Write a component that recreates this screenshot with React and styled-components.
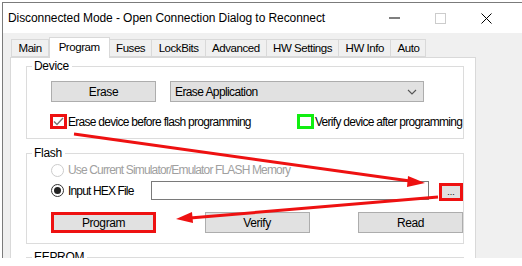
import React from "react";
import styled, { createGlobalStyle } from "styled-components";

const GlobalStyle = createGlobalStyle`
  html, body {
    margin: 0;
    padding: 0;
    background: #ffffff;
  }
  body {
    font-family: "Liberation Sans", Arial, sans-serif;
    font-size: 12px;
    color: #000;
  }
  * {
    white-space: nowrap;
  }
`;

const Page = styled.div`
  width: 522px;
  height: 266px;
  padding: 2px 0 0 2px;
  box-sizing: border-box;
  position: relative;
  overflow: hidden;
`;

const Window = styled.div`
  width: 520px;
  height: 255px;
  border-top: 1px solid #7b7b7b;
  border-left: 1px solid #7b7b7b;
  display: flex;
  flex-direction: column;
  overflow: hidden;
`;

const TitleBar = styled.div`
  height: 30px;
  flex: none;
  background: #fff;
  display: flex;
  align-items: center;
  padding-left: 5px;
`;

const Title = styled.div`
  flex: 1;
  font-size: 12px;
  letter-spacing: -0.08px;
`;

const Caption = styled.div`
  width: 46px;
  height: 30px;
  display: flex;
  align-items: center;
  justify-content: center;
`;

const Body = styled.div`
  flex: 1;
  background: #f0f0f0;
  padding: 4px 0 0 7px;
  display: flex;
  flex-direction: column;
`;

const TabStrip = styled.div`
  display: flex;
  align-items: flex-end;
  height: 20px;
  padding-left: 1px;
  position: relative;
  z-index: 1;
`;

const Tab = styled.div`
  height: ${p => (p.active ? "21px" : "18px")};
  margin-bottom: ${p => (p.active ? "-1px" : "0")};
  padding: 0 ${p => (p.active ? "9px" : "6px")} 0 ${p => (p.active ? "9px" : "6.5px")};
  background: ${p => (p.active ? "#fff" : "#f0f0f0")};
  border: 1px solid #d9d9d9;
  border-bottom: ${p => (p.active ? "none" : "1px solid #d9d9d9")};
  border-left: ${p => (p.first || p.active ? "1px solid #d9d9d9" : "none")};
  display: flex;
  align-items: center;
  box-sizing: border-box;
  font-size: 11.5px;
  letter-spacing: -0.45px;
  padding-bottom: ${p => (p.active ? "3px" : "0")};
`;

const Panel = styled.div`
  width: 501px;
  flex: 1;
  background: #fff;
  border: 1px solid #d9d9d9;
  border-bottom: none;
  box-sizing: border-box;
  padding: 1px 11px 0 15px;
  display: flex;
  flex-direction: column;
  gap: 7px;
`;

const Group = styled.fieldset`
  margin: 0;
  padding: 0 0 0 24px;
  border: 1px solid #dcdcdc;
  height: ${p => p.h}px;
  box-sizing: border-box;
  display: flex;
  flex-direction: column;
  flex: none;
`;

const Legend = styled.legend`
  padding: 0 3px 0 2px;
  margin-left: -19px;
  font-size: 12px;
  line-height: 14px;
  letter-spacing: -0.3px;
`;

const Row = styled.div`
  display: flex;
  align-items: center;
  margin-top: ${p => p.mt || 0}px;
  gap: ${p => p.gap || 0}px;
`;

const Button = styled.div`
  width: 105px;
  height: 21px;
  box-sizing: border-box;
  background: #e1e1e1;
  border: ${p => (p.mark ? "3px solid #ee1111" : "1px solid #adadad")};
  display: flex;
  align-items: center;
  justify-content: center;
  font-size: 12px;
  letter-spacing: -0.4px;
  flex: none;
`;

const Select = styled.div`
  width: 254px;
  height: 21px;
  box-sizing: border-box;
  background: #e1e1e1;
  border: 1px solid #adadad;
  display: flex;
  align-items: center;
  justify-content: space-between;
  padding: 0 6px 0 4px;
  letter-spacing: -0.6px;
`;

const CheckGrid = styled.div`
  display: grid;
  grid-template-columns: 247px auto;
  margin-top: 12px;
  margin-left: -1px;
`;

const CheckLabel = styled.div`
  display: flex;
  align-items: center;
  letter-spacing: -0.72px;
`;

const CheckBox = styled.div`
  width: 17px;
  height: 15px;
  box-sizing: border-box;
  border: 3px solid ${p => p.ring};
  background: #fff;
  display: flex;
  align-items: center;
  justify-content: center;
  margin-right: 1px;
`;

const RadioRow = styled.div`
  display: flex;
  align-items: center;
  height: 20px;
  color: ${p => (p.disabled ? "#a0a0a0" : "#000")};
  letter-spacing: -0.85px;
`;

const Radio = styled.div`
  width: 13px;
  height: 13px;
  box-sizing: border-box;
  border-radius: 50%;
  border: 1px solid ${p => (p.disabled ? "#cccccc" : "#333")};
  background: #fff;
  margin-right: 4px;
  display: flex;
  align-items: center;
  justify-content: center;
  &::after {
    content: "";
    width: 7px;
    height: 7px;
    border-radius: 50%;
    background: ${p => (p.checked ? "#222" : "transparent")};
  }
`;

const FileInput = styled.div`
  width: 278px;
  height: 19px;
  box-sizing: border-box;
  border: 1px solid #7a7a7a;
  background: #fff;
  margin-left: auto;
`;

const HexField = styled.div`
  display: flex;
  align-items: center;
  width: 412px;
`;

const Browse = styled.div`
  width: 24px;
  height: 18px;
  box-sizing: border-box;
  margin-left: 10px;
  margin-top: 3px;
  border: 3px solid #ee1111;
  background: #e1e1e1;
  display: flex;
  align-items: center;
  justify-content: center;
  font-size: 9px;
  line-height: 1;
`;

const ButtonRow = styled.div`
  display: grid;
  grid-template-columns: 105px 105px 105px;
  column-gap: 48.5px;
  margin-top: 11px;
`;

const Overlay = styled.svg`
  position: absolute;
  left: 0;
  top: 0;
  pointer-events: none;
`;

const RightStrip = styled.div`
  flex: 1;
`;

function Chevron() {
  return (
    <svg width="10" height="6" viewBox="0 0 10 6">
      <path d="M1 1 L5 5 L9 1" fill="none" stroke="#555" strokeWidth="1.1" />
    </svg>
  );
}

function Tick() {
  return (
    <svg width="11" height="9" viewBox="0 0 11 9">
      <path d="M1 4.5 L4 7.5 L10 1" fill="none" stroke="#777" strokeWidth="1.4" />
    </svg>
  );
}

const tabs = ["Main", "Program", "Fuses", "LockBits", "Advanced", "HW Settings", "HW Info", "Auto"];

export default function App() {
  return (
    <Page>
      <GlobalStyle />
      <Window>
        <TitleBar>
          <Title>Disconnected Mode - Open Connection Dialog to Reconnect</Title>
          <Caption>
            <svg width="11" height="2" viewBox="0 0 11 2"><rect width="11" height="1" y="0.5" fill="#000" /></svg>
          </Caption>
          <Caption>
            <svg width="11" height="11" viewBox="0 0 11 11"><rect x="0.5" y="0.5" width="10" height="10" fill="none" stroke="#ccc" /></svg>
          </Caption>
          <Caption style={{ marginRight: 14 }}>
            <svg width="11" height="11" viewBox="0 0 11 11">
              <path d="M0.5 0.5 L10.5 10.5 M10.5 0.5 L0.5 10.5" stroke="#000" strokeWidth="1" />
            </svg>
          </Caption>
        </TitleBar>
        <Body>
          <TabStrip>
            {tabs.map((t, i) => (
              <Tab key={t} first={i === 0} active={t === "Program"}>{t}</Tab>
            ))}
          </TabStrip>
          <Row style={{ flex: 1, alignItems: "stretch" }}>
            <Panel>
              <Group h={80}>
                <Legend>Device</Legend>
                <Row mt={8} gap={14}>
                  <Button>Erase</Button>
                  <Select>
                    <span>Erase Application</span>
                    <Chevron />
                  </Select>
                </Row>
                <CheckGrid>
                  <CheckLabel>
                    <CheckBox ring="#ee1111"><Tick /></CheckBox>
                    Erase device before flash programming
                  </CheckLabel>
                  <CheckLabel>
                    <CheckBox ring="#11ee11" />
                    Verify device after programming
                  </CheckLabel>
                </CheckGrid>
              </Group>
              <Group h={98}>
                <Legend>Flash</Legend>
                <RadioRow disabled>
                  <Radio disabled />
                  Use Current Simulator/Emulator FLASH Memory
                </RadioRow>
                <HexField>
                  <RadioRow>
                    <Radio checked />
                    Input HEX File
                  </RadioRow>
                  <FileInput />
                  <Browse>...</Browse>
                </HexField>
                <ButtonRow>
                  <Button mark>Program</Button>
                  <Button>Verify</Button>
                  <Button>Read</Button>
                </ButtonRow>
              </Group>
              <Group h={30} style={{ marginTop: -1 }}>
                <Legend>EEPROM</Legend>
              </Group>
            </Panel>
            <RightStrip />
          </Row>
        </Body>
      </Window>
      <Overlay width="522" height="266">
        <line x1="74" y1="134" x2="410" y2="181" stroke="#ee1111" strokeWidth="3" />
        <polygon points="425,183 408,176 407,187" fill="#ee1111" />
        <line x1="438" y1="197" x2="190" y2="218" stroke="#ee1111" strokeWidth="3" />
        <polygon points="176,219 192,212 193,223" fill="#ee1111" />
      </Overlay>
    </Page>
  );
}
